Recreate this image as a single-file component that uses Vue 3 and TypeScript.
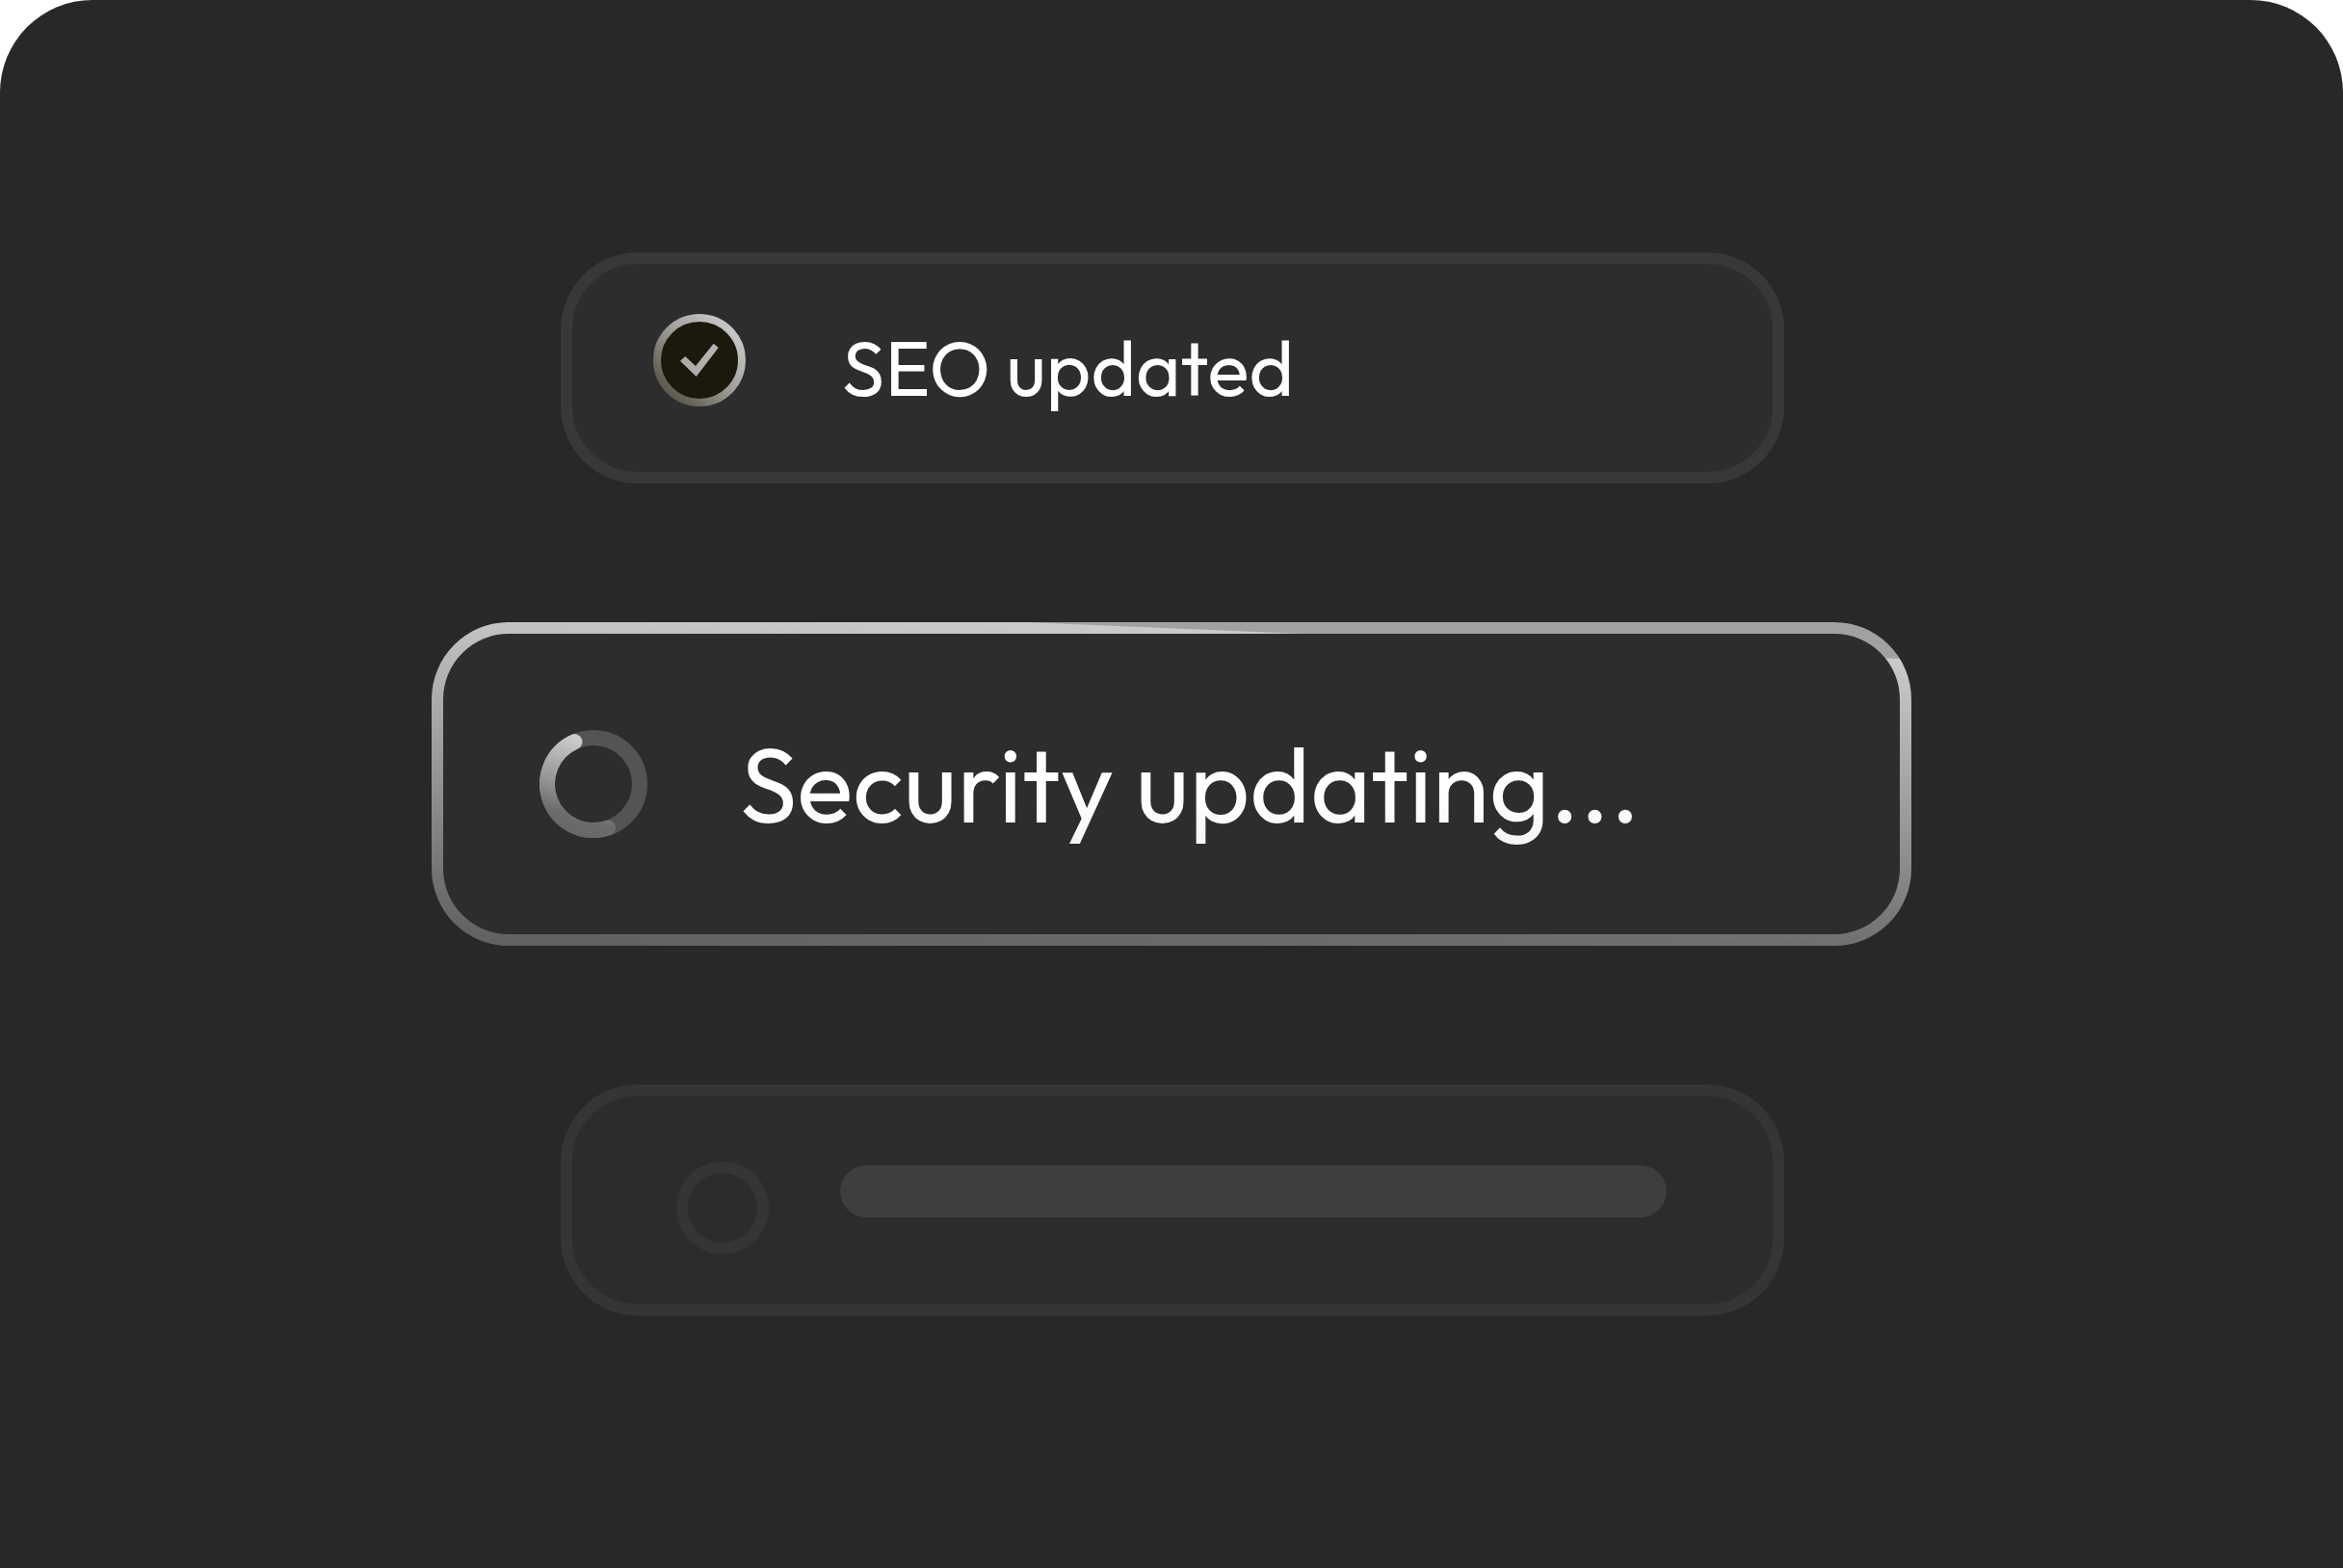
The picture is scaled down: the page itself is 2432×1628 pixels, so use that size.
<script setup lang="ts">
const doneLabel = 'SEO updated'
const activeLabel = 'Security updating...'
</script>

<template>
  <main class="stage">
    <ul class="tasks">
      <li class="task side done">
        <svg class="icon" viewBox="0 0 96 96" width="96" height="96" aria-hidden="true">
          <defs>
            <linearGradient id="ring" x1="0.85" y1="0.15" x2="0.15" y2="0.85">
              <stop offset="0" stop-color="#c4c4c4" />
              <stop offset="0.45" stop-color="#a2a19d" />
              <stop offset="1" stop-color="#5f5d52" />
            </linearGradient>
            <linearGradient id="tick" x1="1" y1="0" x2="0" y2="1">
              <stop offset="0" stop-color="#b6b6b4" />
              <stop offset="1" stop-color="#a9a8a4" />
            </linearGradient>
          </defs>
          <circle cx="48" cy="48" r="44" fill="#1c190c" stroke="url(#ring)" stroke-width="8" />
          <path d="M28 48.7 33.3 44 44 54 62.7 30.7 67.7 35 44.7 65Z" fill="url(#tick)" />
        </svg>
        <span class="label small">{{ doneLabel }}</span>
      </li>

      <li class="task active">
        <svg class="icon" viewBox="0 0 112 112" width="112" height="112" aria-hidden="true">
          <defs>
            <linearGradient id="arc" x1="0.6" y1="0" x2="0.4" y2="1">
              <stop offset="0" stop-color="#cacaca" />
              <stop offset="0.5" stop-color="#979797" />
              <stop offset="0.85" stop-color="#6c6c6c" />
              <stop offset="1" stop-color="#686868" />
            </linearGradient>
          </defs>
          <circle cx="56" cy="56" r="48" fill="none" stroke="#545454" stroke-width="16" />
          <path
            d="M36.5 12.14A48 48 0 0 0 71 101.6"
            fill="none"
            stroke="url(#arc)"
            stroke-width="16"
            stroke-linecap="round"
          />
        </svg>
        <span class="label large">{{ activeLabel }}</span>
      </li>

      <li class="task side pending">
        <span class="dot"></span>
        <span class="bar"></span>
      </li>
    </ul>
  </main>
</template>

<style>
body {
  margin: 0;
  background: #fff;
}
</style>

<style scoped>
.stage {
  box-sizing: border-box;
  min-height: 100vh;
  padding: 0 448px;
  display: flex;
  align-items: center;
  background: #282828;
  border-radius: 96px 96px 0 0;
  font-family: Outfit, Lato, "Liberation Sans", sans-serif;
}

.tasks {
  flex: 1;
  margin: 0;
  padding: 0;
  list-style: none;
  display: flex;
  flex-direction: column;
  gap: 144px;
}

.task {
  display: flex;
  align-items: flex-start;
  border: 12px solid #39373a;
  border-radius: 80px;
  background: #2d2d2d;
}

.side {
  margin: 0 132px 0 134px;
}

.done {
  padding: 52px 84px;
  gap: 100px;
}

.active {
  align-items: center;
  padding: 90px 100px;
  gap: 96px;
  border-color: transparent;
  background:
    linear-gradient(#2d2d2d, #2d2d2d) padding-box,
    linear-gradient(182.4deg, #a1a1a1 38px, #cbcbcb 39px, #c3c3c3 64px, #929292 231px, #6f6f6f 340px, #5f5f5f) border-box;
}

.pending {
  padding: 68px 110px 52px 108px;
  gap: 74px;
  border-color: #363437;
  background: #2c2c2c;
}

.icon {
  display: block;
  flex: none;
}

.label {
  color: #fff;
  white-space: nowrap;
  font-variant-ligatures: none;
}

.small {
  font-size: 80px;
  line-height: 112px;
}

.large {
  font-size: 108px;
  line-height: 132px;
  color: transparent;
  background: linear-gradient(#fff 60%, #f4f4f4) text;
}

.dot {
  box-sizing: border-box;
  flex: none;
  width: 96px;
  height: 96px;
  border: 12px solid #363437;
  border-radius: 50%;
}

.bar {
  flex: 1;
  height: 54px;
  margin-top: 4px;
  border-radius: 27px;
  background: #3e3e3e;
}
</style>
